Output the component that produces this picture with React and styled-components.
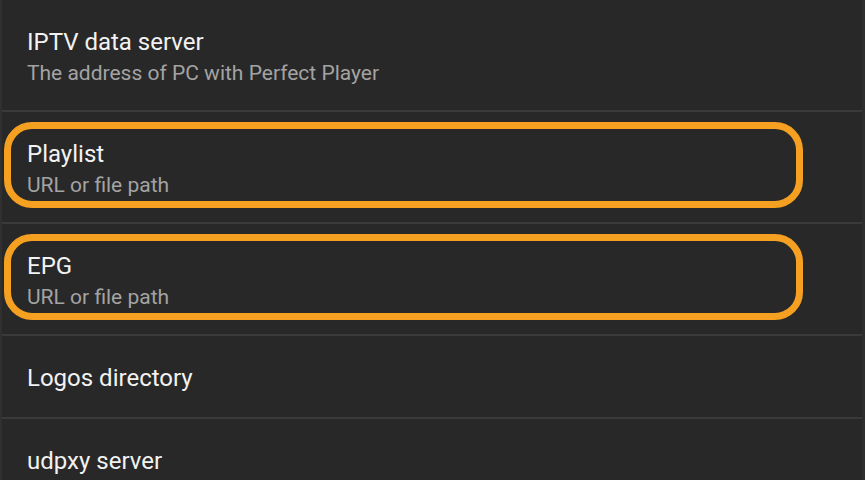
import React from "react";
import styled, { createGlobalStyle } from "styled-components";

const GlobalStyle = createGlobalStyle`
  html, body {
    margin: 0;
    padding: 0;
    background: #282828;
  }
  body {
    font-family: Roboto, "Noto Sans", "Liberation Sans", sans-serif;
  }
`;

const Page = styled.div`
  width: 865px;
  height: 480px;
  box-sizing: border-box;
  background: #282828;
  border-left: 2px solid #303030;
  border-right: 3px solid #2e2e2e;
  overflow: hidden;
`;

const Row = styled.div`
  height: ${(props) => (props.short ? "83px" : "112px")};
  box-sizing: border-box;
  padding-top: 10px;
  padding-left: 2px;
  border-bottom: 2px solid #3a3a3a;
  display: flex;
  align-items: flex-start;
`;

const Frame = styled.div`
  width: 799px;
  box-sizing: border-box;
  padding: 10px 16px 1px;
  border: 7px solid ${(props) => (props.focused ? "#f5a021" : "transparent")};
  border-radius: 28px;
  display: flex;
  flex-direction: column;
`;

const Title = styled.div`
  font-size: 24px;
  line-height: 30px;
  color: #f2f2f2;
`;

const Subtitle = styled.div`
  margin-top: 1px;
  font-size: 21px;
  line-height: 30px;
  color: #a3a3a3;
`;

const items = [
  { title: "IPTV data server", sub: "The address of PC with Perfect Player" },
  { title: "Playlist", sub: "URL or file path", focused: true },
  { title: "EPG", sub: "URL or file path", focused: true },
  { title: "Logos directory" },
  { title: "udpxy server" },
];

const App = () => {
  return (
    <>
      <GlobalStyle />
      <Page>
        {items.map((item, i) => (
          <Row key={i} short={!item.sub}>
            <Frame focused={item.focused}>
              <Title>{item.title}</Title>
              {item.sub && <Subtitle>{item.sub}</Subtitle>}
            </Frame>
          </Row>
        ))}
      </Page>
    </>
  );
};

export default App;
